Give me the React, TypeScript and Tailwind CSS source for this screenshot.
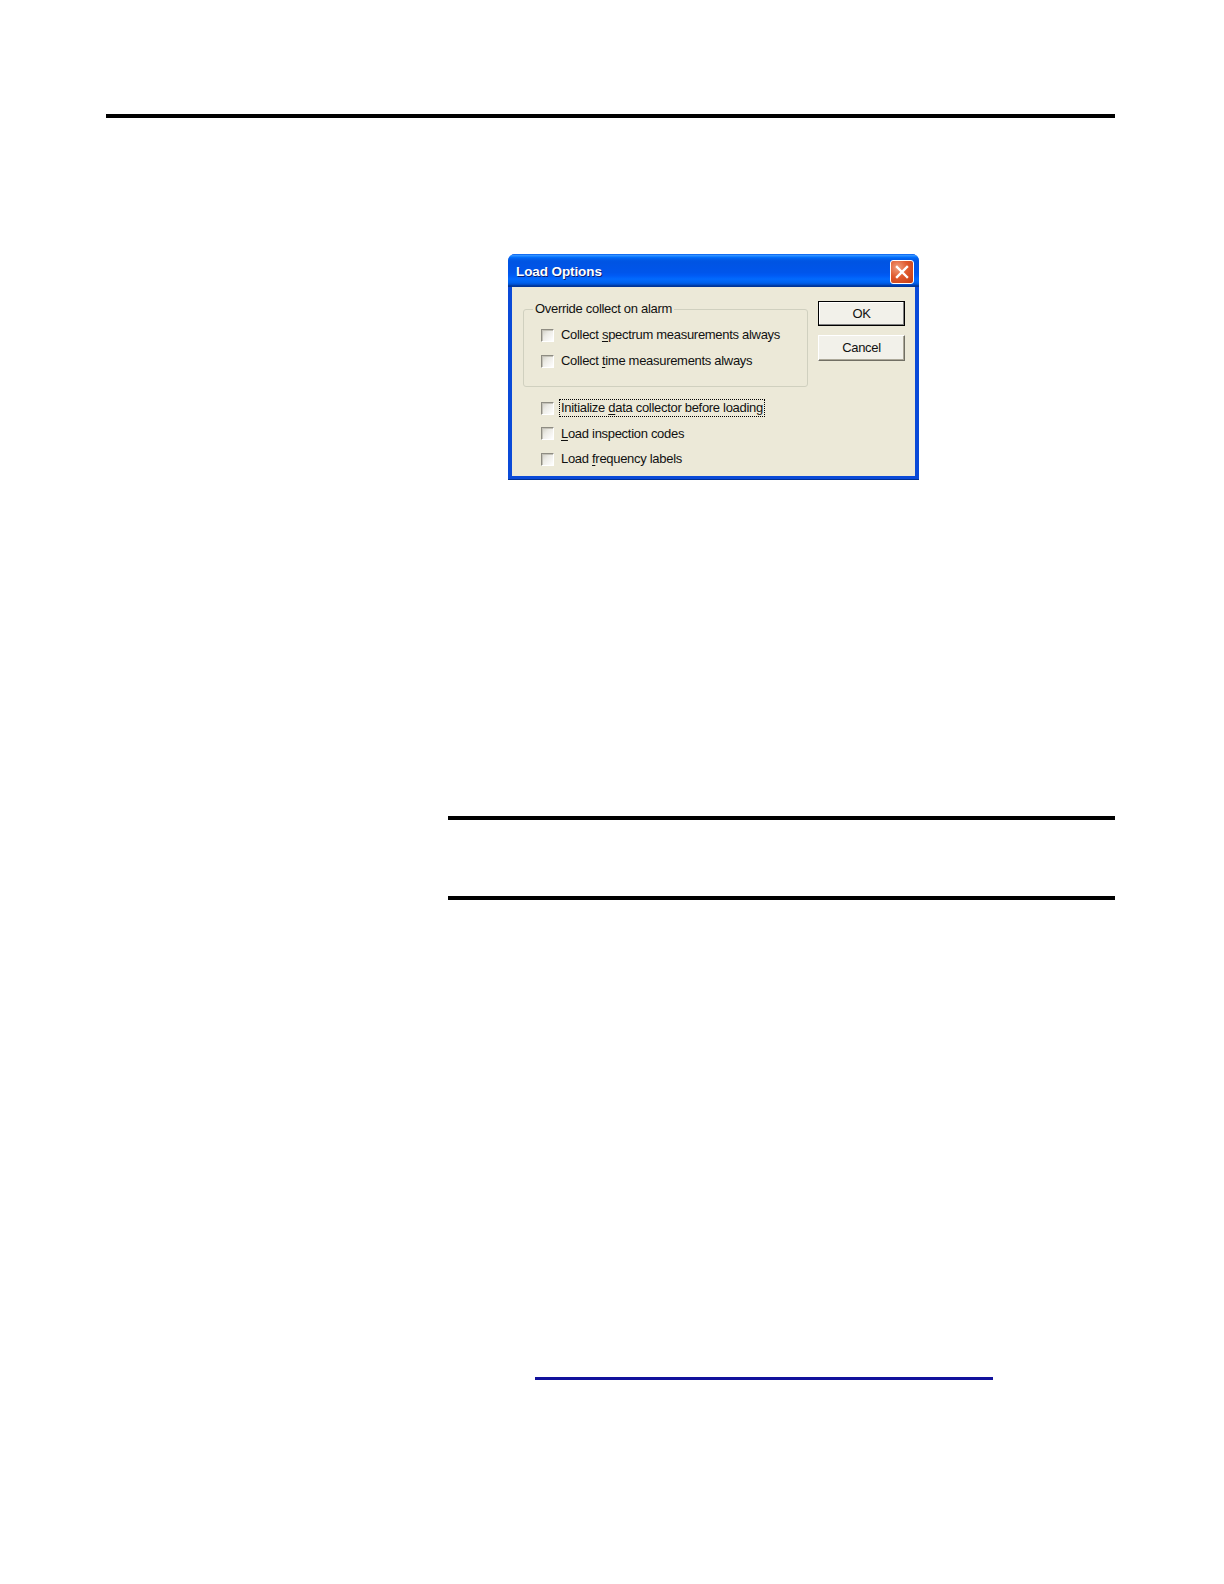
import React from "react";

const FONT = { fontFamily: '"Liberation Sans", Arial, sans-serif' };

function Check({ label, accessKey, focused }: { label: string; accessKey: number; focused?: boolean }) {
  const before = label.slice(0, accessKey);
  const key = label.slice(accessKey, accessKey + 1);
  const after = label.slice(accessKey + 1);
  return (
    <div className="flex items-center h-[20px]">
      <span className="w-[13px] h-[13px] shrink-0 border border-t-[#8e8c82] border-l-[#8e8c82] border-b-[#ffffff] border-r-[#ffffff] bg-[linear-gradient(135deg,#cfcdc4_0%,#ecebe5_40%,#ffffff_100%)] shadow-[inset_1px_1px_0_#c4c2b8]" />
      <span
        className={
          "ml-[6px] px-[1px] leading-[16px] text-[13px] tracking-[-0.3px] text-[#111]" +
          (focused ? " outline outline-1 outline-dotted outline-black" : "")
        }
      >
        {before}
        <span className="underline underline-offset-[2px]">{key}</span>
        {after}
      </span>
    </div>
  );
}

function LoadOptions() {
  return (
    <div
      className="w-[411px] h-[226px] flex flex-col rounded-t-[7px] bg-[#0a4ad8] border-b-[1px] border-[#003092] overflow-hidden"
      style={FONT}
    >
      <div className="h-[33px] shrink-0 flex items-center justify-between pl-[8px] pr-[5px] bg-[linear-gradient(180deg,#0058ee_0%,#3593ff_4%,#288eff_6%,#127dff_8%,#036ffc_10%,#0262ee_14%,#0057e5_20%,#0054e3_24%,#0055eb_56%,#005bf5_66%,#026afe_76%,#0062ef_86%,#0052d6_92%,#0040ab_94%,#003092_100%)]">
        <span className="pt-[4px] text-white font-bold text-[13.5px] tracking-[-0.1px] [text-shadow:1px_1px_0_#0a1f70]">
          Load Options
        </span>
        <span className="mt-[2px] w-[24px] h-[24px] rounded-[3px] border border-white flex items-center justify-center bg-[radial-gradient(circle_at_30%_30%,#f0a080_0%,#e05a2e_45%,#c23a12_100%)]">
          <svg width="14" height="14" viewBox="0 0 14 14">
            <path d="M2 2 L12 12 M12 2 L2 12" stroke="white" strokeWidth="2.4" strokeLinecap="square" />
          </svg>
        </span>
      </div>
      <div className="flex-1 mx-[4px] mb-[3px] bg-[#ece9d8] flex">
        <div className="w-[296px] pl-[11px] pt-[15px] flex flex-col">
          <fieldset className="w-[285px] h-[85px] border border-[#d0d0bf] rounded-[3px] px-[17px] pt-[9px] m-0 min-w-0">
            <legend className="px-[2px] ml-[-8px] text-[13px] tracking-[-0.3px] leading-[14px] text-[#111]">
              Override collect on alarm
            </legend>
            <div className="flex flex-col gap-[6px]">
              <Check label="Collect spectrum measurements always" accessKey={8} />
              <Check label="Collect time measurements always" accessKey={8} />
            </div>
          </fieldset>
          <div className="pl-[18px] mt-[11px] flex flex-col gap-[5.5px]">
            <Check label="Initialize data collector before loading" accessKey={11} focused />
            <Check label="Load inspection codes" accessKey={0} />
            <Check label="Load frequency labels" accessKey={5} />
          </div>
        </div>
        <div className="ml-[10px] pt-[14px] flex flex-col gap-[9px]">
          <button className="w-[87px] h-[25px] border border-black bg-[#f2f1ea] text-[13px] tracking-[-0.3px] text-[#111] flex items-center justify-center shadow-[inset_-1px_-1px_0_#808080,inset_1px_1px_0_#ffffff]">
            OK
          </button>
          <button className="w-[87px] h-[26px] border border-t-white border-l-white border-b-[#716f64] border-r-[#716f64] bg-[#f2f1ea] text-[13px] tracking-[-0.3px] text-[#111] flex items-center justify-center shadow-[inset_-1px_-1px_0_#aca899]">
            Cancel
          </button>
        </div>
      </div>
    </div>
  );
}

export default function App() {
  return (
    <div className="min-h-[1584px] w-[1224px] bg-white flex flex-col">
      <div className="mt-[114px] ml-[106px] w-[1009px] h-[4px] bg-black" />
      <div className="mt-[136px] ml-[508px]">
        <LoadOptions />
      </div>
      <div className="mt-[336px] ml-[448px] w-[667px] h-[4px] bg-black" />
      <div className="mt-[76px] ml-[448px] w-[667px] h-[4px] bg-black" />
      <a className="block mt-[477px] ml-[535px] w-[458px] h-[3px] bg-[#12129c]" href="#" aria-label="link" />
    </div>
  );
}
